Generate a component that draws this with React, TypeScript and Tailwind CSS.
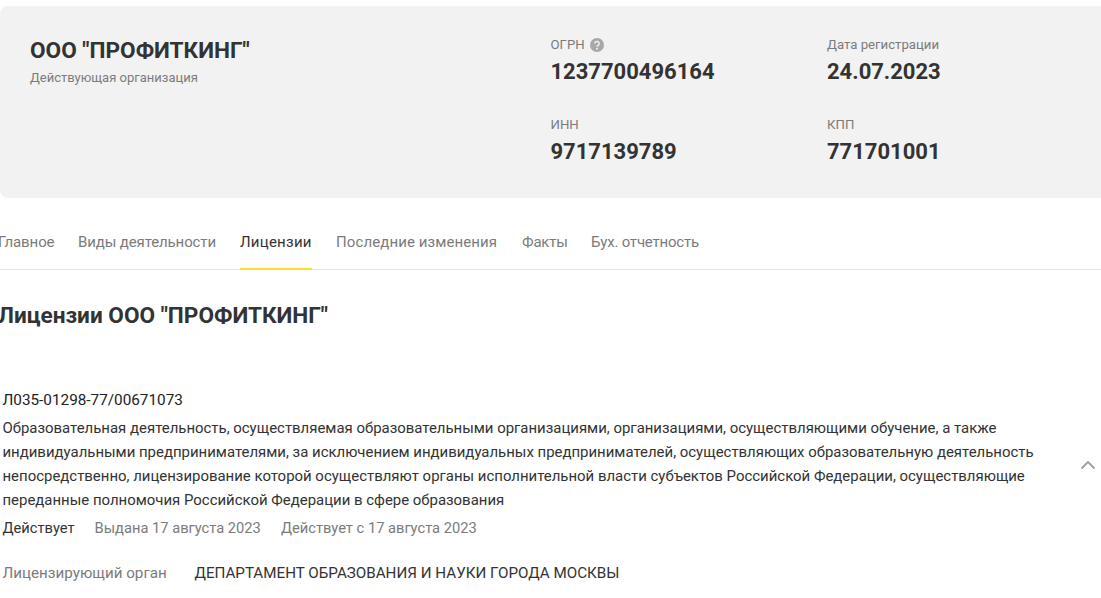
import React from 'react';
import { ChevronUp } from 'lucide-react';

const tabs = [
  { name: 'Главное', cls: 'ml-[-2px] w-[56px] tracking-[-0.1px]' },
  { name: 'Виды деятельности', cls: 'w-[138px] tracking-[-0.12px]' },
  { name: 'Лицензии', cls: 'w-[72px] tracking-[0.25px]' },
  { name: 'Последние изменения', cls: 'w-[161px] tracking-[0.1px]' },
  { name: 'Факты', cls: 'ml-[1px] w-[45px] tracking-[-0.2px]' },
  { name: 'Бух. отчетность', cls: 'w-[108px] tracking-[-0.2px]' },
];

function Stat({ label, value, help }: { label: string; value: string; help?: boolean }) {
  return (
    <div>
      <div className="flex h-[18px] items-center gap-[5px] text-[13.2px] leading-[18px] text-[#7b7b7b]">
        <span>{label}</span>
        {help && (
          <svg width="14" height="14" viewBox="0 0 14 14">
            <circle cx="7" cy="7" r="7" fill="#a8a8a8" />
            <path d="M4.9 5.5a2.1 2.1 0 1 1 3.2 1.8c-.7.4-1.1.8-1.1 1.5" fill="none" stroke="#f2f2f2" strokeWidth="1.5" />
            <circle cx="7" cy="10.7" r="0.95" fill="#f2f2f2" />
          </svg>
        )}
      </div>
      <div className="mt-[4px] text-[22px] font-bold leading-[28px] text-[#333333]">{value}</div>
    </div>
  );
}

export default function App() {
  return (
    <div className="h-[598px] w-[1101px] overflow-hidden bg-white font-['Roboto',sans-serif] text-[#333333]">
      {/* Company card */}
      <div className="mt-[6px] flex h-[192px] w-[1109px] rounded-[8px] bg-[#f2f2f2] pl-[30px] pt-[30px]">
        <div className="w-[520.5px] pt-[1px]">
          <h1 className="text-[22.6px] font-bold leading-[28px]">ООО "ПРОФИТКИНГ"</h1>
          <p className="mt-[4px] text-[13px] leading-[18px] text-[#7b7b7b]">Действующая организация</p>
        </div>
        <div className="grid h-fit grid-cols-[276.5px_200px] gap-y-[30px]">
          <Stat label="ОГРН" value="1237700496164" help />
          <Stat label="Дата регистрации" value="24.07.2023" />
          <Stat label="ИНН" value="9717139789" />
          <Stat label="КПП" value="771701001" />
        </div>
      </div>

      {/* Tabs */}
      <div className="mt-[23px] flex h-[49px] gap-[24px] border-b border-[#e3e3e3] text-[15px]">
        {tabs.map((tab) => (
          <div
            key={tab.name}
            className={`${tab.cls} h-[49px] whitespace-nowrap border-b-2 pt-[10px] leading-[22px] ${
              tab.name === 'Лицензии' ? 'border-[#ffdd2d] text-[#333333]' : 'border-transparent text-[#7b7b7b]'
            }`}
          >
            {tab.name}
          </div>
        ))}
      </div>

      <h2 className="ml-[-2px] mt-[32px] text-[22.6px] font-bold leading-[28px]">Лицензии ООО "ПРОФИТКИНГ"</h2>

      {/* License */}
      <div className="mt-[60px] flex items-center pl-[2.5px]">
        <div className="w-[1060px]">
          <div className="text-[15.3px] leading-[20px] text-[#222222]">Л035-01298-77/00671073</div>
          <p className="mt-[6px] text-[14.95px] leading-[24px] text-[#333333]">
            Образовательная деятельность, осуществляемая образовательными организациями, организациями, осуществляющими обучение, а также
            <br />
            индивидуальными предпринимателями, за исключением индивидуальных предпринимателей, осуществляющих образовательную деятельность
            <br />
            непосредственно, лицензирование которой осуществляют органы исполнительной власти субъектов Российской Федерации, осуществляющие
            <br />
            переданные полномочия Российской Федерации в сфере образования
          </p>
          <div className="mt-[4px] flex gap-[20px] text-[14.7px] leading-[24px] text-[#7b7b7b]">
            <span className="text-[#333333]">Действует</span>
            <span>Выдана 17 августа 2023</span>
            <span>Действует с 17 августа 2023</span>
          </div>
        </div>
        <ChevronUp size={24} strokeWidth={1.8} className="ml-[13px] text-[#a0a0a0]" />
      </div>

      <div className="mt-[21px] flex pl-[2.5px] text-[15.2px] leading-[24px]">
        <span className="w-[192px] text-[#7b7b7b]">Лицензирующий орган</span>
        <span>ДЕПАРТАМЕНТ ОБРАЗОВАНИЯ И НАУКИ ГОРОДА МОСКВЫ</span>
      </div>
    </div>
  );
}
